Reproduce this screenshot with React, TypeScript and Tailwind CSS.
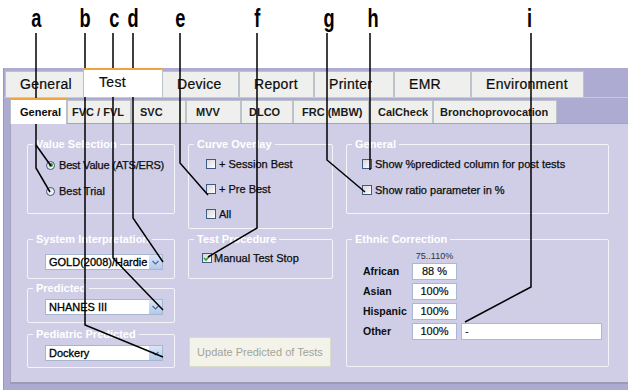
import React from 'react';

const letters = [
  { ch: 'a', cls: 'left-[36px]' },
  { ch: 'b', cls: 'left-[85px]' },
  { ch: 'c', cls: 'left-[114px]' },
  { ch: 'd', cls: 'left-[133px]' },
  { ch: 'e', cls: 'left-[180px]' },
  { ch: 'f', cls: 'left-[257px]' },
  { ch: 'g', cls: 'left-[329px]' },
  { ch: 'h', cls: 'left-[373px]' },
  { ch: 'i', cls: 'left-[530px]' },
];

const leaders = [
  '36,33 36,168 50,192',
  '36,145 51,166',
  '85,33 85,325 163,357',
  '113,33 113,258 163,310',
  '133,33 133,218 163,262',
  '180,33 180,163 208,195',
  '257,33 257,228 208,257',
  '327,33 327,160 365,192',
  '370,33 370,170',
  '531,33 531,287 465,322',
];

const topTabs = [
  { label: 'General', w: 'w-[79px]' },
  { label: 'Test', w: 'w-[80px]', selected: true },
  { label: 'Device', w: 'w-[77px]' },
  { label: 'Report', w: 'w-[75px]' },
  { label: 'Printer', w: 'w-[80px]' },
  { label: 'EMR', w: 'w-[77px]' },
  { label: 'Environment', w: 'w-[113px]' },
];

const subTabs = [
  { label: 'General', w: 'w-[57px]', pl: 'pl-[9px]', selected: true },
  { label: 'FVC / FVL', w: 'w-[64px]', pl: 'pl-[4px]' },
  { label: 'SVC', w: 'w-[55px]', pl: 'pl-[8px]' },
  { label: 'MVV', w: 'w-[55px]', pl: 'pl-[9px]' },
  { label: 'DLCO', w: 'w-[52px]', pl: 'pl-[7px]' },
  { label: 'FRC (MBW)', w: 'w-[76px]', pl: 'pl-[8px]' },
  { label: 'CalCheck', w: 'w-[64px]', pl: 'pl-[8px]' },
  { label: 'Bronchoprovocation', w: 'w-[124px]', pl: 'pl-[6px]' },
];

const ethnic = [
  { label: 'African', value: '88 %' },
  { label: 'Asian', value: '100%' },
  { label: 'Hispanic', value: '100%' },
  { label: 'Other', value: '100%', extra: true },
];

function Group({ title, className, children }: { title: string; className: string; children: React.ReactNode }) {
  return (
    <fieldset className={`border border-[#f3f3fa] rounded-[2px] ${className}`}>
      <legend className="ml-[5px] px-[3px] text-[11px] leading-[14px] font-bold text-white [-webkit-text-stroke:0px]">{title}</legend>
      {children}
    </fieldset>
  );
}

function Check({ checked }: { checked?: boolean }) {
  return (
    <span className="relative w-[10px] h-[10px] shrink-0 border border-[#3f5b82] bg-gradient-to-br from-[#d6d6dc] to-white">
      {checked && (
        <svg className="absolute left-[0px] top-[0px]" width="8" height="8" viewBox="0 0 8 8">
          <path d="M1 4 L3 6 L7 1.5" fill="none" stroke="#27a32a" strokeWidth="1.6" />
        </svg>
      )}
    </span>
  );
}

function Radio({ checked }: { checked?: boolean }) {
  return (
    <span className="flex items-center justify-center w-[9px] h-[9px] shrink-0 rounded-full border border-[#3c5880] bg-gradient-to-br from-[#d8d8e0] to-white">
      {checked && <span className="w-[4px] h-[4px] rounded-full bg-[#2fa32f]" />}
    </span>
  );
}

function Combo({ value }: { value: string }) {
  return (
    <div className="flex w-[118px] h-[16px] bg-white border border-[#a7b6d0]">
      <span className="flex-1 pl-[3px] text-[11px] leading-[14px] text-black [-webkit-text-stroke:0.3px_#000]">{value}</span>
      <span className="flex items-center justify-center w-[13px] bg-gradient-to-b from-[#dbe6f6] to-[#b4c9ea]">
        <svg width="7" height="5" viewBox="0 0 7 5">
          <path d="M0.5 1 L3.5 4 L6.5 1" fill="none" stroke="#4d6b9c" strokeWidth="1.2" />
        </svg>
      </span>
    </div>
  );
}

export default function App() {
  return (
    <div className="relative w-[628px] h-[390px] overflow-hidden bg-white font-['Liberation_Sans',Arial,sans-serif] text-[#0d0d0d]">
      <div className="relative h-[68px]">
        {letters.map((l) => (
          <span key={l.ch} className={`absolute top-[3px] flex w-0 justify-center ${l.cls}`}>
            <span className="inline-block scale-x-[0.7] text-[26px] leading-[30px] font-bold text-black">{l.ch}</span>
          </span>
        ))}
      </div>

      <div className="ml-[3px] w-[640px] h-[330px] flex flex-col bg-[#aeabd2] border-l border-[#9a98b6]">
        <div className="flex items-end h-[29px] pl-[1px]">
          {topTabs.map((t) =>
            t.selected ? (
              <div key={t.label} className={`${t.w} h-[29px] -mx-[1px] relative z-10 bg-white border-x border-[#b9c0c7] border-t-2 border-t-[#f1a33c] pl-[15px] pt-[3px] text-[14px] leading-[18px] tracking-[0.3px] [-webkit-text-stroke:0.2px_#000]`}>
                {t.label}
              </div>
            ) : (
              <div key={t.label} className={`${t.w} h-[26px] bg-[#eff0ee] border border-b-0 border-[#bcc3c9] pl-[14px] pt-[4px] text-[14px] leading-[17px] tracking-[0.3px] [-webkit-text-stroke:0.2px_#000]`}>
                {t.label}
              </div>
            )
          )}
        </div>

        <div className="flex-1 border-t border-[#c9c8e0] pl-[6px]">
          <div className="flex items-end h-[25px]">
            {subTabs.map((t) =>
              t.selected ? (
                <div key={t.label} className={`${t.w} h-[26px] -mb-[1px] relative z-10 bg-white border-x border-[#b9c0c7] border-t-2 border-t-[#f1a33c] ${t.pl} pt-[5px] text-[11px] leading-[14px] font-bold`}>
                  {t.label}
                </div>
              ) : (
                <div key={t.label} className={`${t.w} h-[23px] bg-[#eff0ee] border border-b-0 border-[#bcc3c9] ${t.pl} pt-[4px] text-[11px] leading-[14px] font-bold text-[#1a1a1a]`}>
                  {t.label}
                </div>
              )
            )}
          </div>

          <div className="h-[261px] flex gap-[13px] pl-[16px] pt-[13px] bg-[#cfcee6] border border-r-0 border-[#a3a2c0] border-b-2 border-b-[#9c9bb4] text-[11px]">
            {/* left column */}
            <div className="flex flex-col w-[148px]">
              <Group title="Value Selection" className="h-[77px]">
                <div className="flex flex-col gap-[10px] pl-[18px] pt-[6px] [-webkit-text-stroke:0.25px_#0d0d0d]">
                  <div className="flex items-center gap-[4px] h-[16px]">
                    <Radio checked />
                    <span className="tracking-[-0.2px]">Best Value (ATS/ERS)</span>
                  </div>
                  <div className="flex items-center gap-[4px] h-[16px]">
                    <Radio />
                    <span>Best Trial</span>
                  </div>
                </div>
              </Group>
              <Group title="System Interpretation" className="h-[47px] mt-[18px]">
                <div className="pl-[17px] pt-[8px]">
                  <Combo value="GOLD(2008)/Hardie" />
                </div>
              </Group>
              <Group title="Predicted" className="h-[42px] mt-[2px]">
                <div className="pl-[17px] pt-[4px]">
                  <Combo value="NHANES III" />
                </div>
              </Group>
              <Group title="Pediatric Predicted" className="h-[41px] mt-[4px]">
                <div className="pl-[17px] pt-[4px]">
                  <Combo value="Dockery" />
                </div>
              </Group>
            </div>

            {/* middle column */}
            <div className="flex flex-col w-[145px]">
              <Group title="Curve Overlay" className="h-[92px]">
                <div className="flex flex-col gap-[9px] pl-[17px] pt-[5px] [-webkit-text-stroke:0.25px_#0d0d0d]">
                  {['+ Session Best', '+ Pre Best', 'All'].map((c) => (
                    <div key={c} className="flex items-center gap-[3px] h-[16px]">
                      <Check />
                      <span>{c}</span>
                    </div>
                  ))}
                </div>
              </Group>
              <Group title="Test Procedure" className="h-[47px] mt-[3px]">
                <div className="flex items-center gap-[2px] h-[16px] pl-[13px] mt-[4px] [-webkit-text-stroke:0.25px_#0d0d0d]">
                  <Check checked />
                  <span>Manual Test Stop</span>
                </div>
              </Group>
              <button className="mt-[58px] ml-[1px] w-[142px] h-[30px] rounded-[2px] bg-[#f3f3ea] border border-[#dcdccb] text-[11px] text-[#a3a39a]">
                Update Predicted of Tests
              </button>
            </div>

            {/* right column */}
            <div className="flex flex-col w-[263px]">
              <Group title="General" className="h-[77px]">
                <div className="flex flex-col gap-[10px] pl-[15px] pt-[5px] [-webkit-text-stroke:0.25px_#0d0d0d]">
                  {['Show %predicted column for post tests', 'Show ratio parameter in %'].map((c) => (
                    <div key={c} className="flex items-center gap-[3px] h-[16px]">
                      <Check />
                      <span>{c}</span>
                    </div>
                  ))}
                </div>
              </Group>
              <Group title="Ethnic Correction" className="h-[135px] mt-[18px]">
                <div className="flex flex-col pl-[16px] pt-[4px]">
                  <div className="ml-[49px] w-[45px] mb-[1px] text-center text-[9px] leading-[12px] text-[#333]">75..110%</div>
                  <div className="flex flex-col gap-[3px]">
                    {ethnic.map((r) => (
                      <div key={r.label} className="flex items-center h-[17px]">
                        <span className="w-[49px] text-[10.5px] font-bold">{r.label}</span>
                        <span className="w-[45px] h-[17px] bg-white border border-[#a9b8d5] text-center leading-[15px] [-webkit-text-stroke:0.2px_#0d0d0d]">{r.value}</span>
                        {r.extra && (
                          <span className="ml-[4px] w-[141px] h-[17px] bg-white border border-[#a9b8d5] pl-[3px] leading-[15px]">-</span>
                        )}
                      </div>
                    ))}
                  </div>
                </div>
              </Group>
            </div>
          </div>
        </div>
      </div>

      <svg className="absolute left-0 top-0 pointer-events-none" width="628" height="390">
        {leaders.map((p) => (
          <polyline key={p} points={p} fill="none" stroke="#000" strokeWidth="1.5" />
        ))}
      </svg>
    </div>
  );
}
